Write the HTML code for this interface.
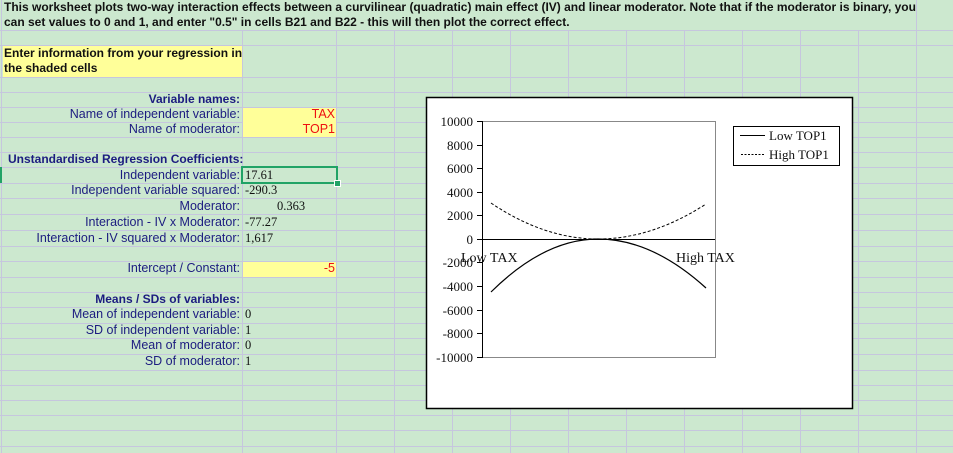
<!DOCTYPE html>
<html><head><meta charset="utf-8"><style>
body{margin:0;width:953px;height:453px;background:#cce8cf;position:relative;overflow:hidden;font-family:"Liberation Sans",Arial,sans-serif;}
.t{position:absolute;font-size:12.5px;line-height:15px;color:#1c1c80;white-space:nowrap;}
.r{text-align:right;right:713px;}
.b{font-weight:bold;}
.v{position:absolute;font-size:12.5px;line-height:15px;color:#111;font-family:"Liberation Serif",serif;white-space:nowrap;}
.y{position:absolute;background:#ffff99;}
.red{color:#ee1111;}
</style></head><body>
<svg width="953" height="453" style="position:absolute;left:0;top:0">
<g stroke="#c6c6de" stroke-width="1">
<line x1="1.5" y1="0" x2="1.5" y2="453"/>
<line x1="242.5" y1="30" x2="242.5" y2="453"/>
<line x1="336.5" y1="30" x2="336.5" y2="453"/>
<line x1="394.5" y1="30" x2="394.5" y2="453"/>
<line x1="452.5" y1="30" x2="452.5" y2="453"/>
<line x1="510.5" y1="30" x2="510.5" y2="453"/>
<line x1="568.5" y1="30" x2="568.5" y2="453"/>
<line x1="626.5" y1="30" x2="626.5" y2="453"/>
<line x1="684.5" y1="30" x2="684.5" y2="453"/>
<line x1="742.5" y1="30" x2="742.5" y2="453"/>
<line x1="800.5" y1="30" x2="800.5" y2="453"/>
<line x1="858.5" y1="30" x2="858.5" y2="453"/>
<line x1="916.5" y1="0" x2="916.5" y2="453"/>
<line x1="0" y1="30.5" x2="953" y2="30.5"/>
<line x1="0" y1="45.5" x2="953" y2="45.5"/>
<line x1="0" y1="77.5" x2="953" y2="77.5"/>
<line x1="0" y1="92.5" x2="953" y2="92.5"/>
<line x1="0" y1="107.5" x2="953" y2="107.5"/>
<line x1="0" y1="122.5" x2="953" y2="122.5"/>
<line x1="0" y1="137.5" x2="953" y2="137.5"/>
<line x1="0" y1="152.5" x2="953" y2="152.5"/>
<line x1="0" y1="167.5" x2="953" y2="167.5"/>
<line x1="0" y1="183.5" x2="953" y2="183.5"/>
<line x1="0" y1="198.5" x2="953" y2="198.5"/>
<line x1="0" y1="214.5" x2="953" y2="214.5"/>
<line x1="0" y1="230.5" x2="953" y2="230.5"/>
<line x1="0" y1="246.5" x2="953" y2="246.5"/>
<line x1="0" y1="261.5" x2="953" y2="261.5"/>
<line x1="0" y1="277.5" x2="953" y2="277.5"/>
<line x1="0" y1="292.5" x2="953" y2="292.5"/>
<line x1="0" y1="307.5" x2="953" y2="307.5"/>
<line x1="0" y1="323.5" x2="953" y2="323.5"/>
<line x1="0" y1="338.5" x2="953" y2="338.5"/>
<line x1="0" y1="354.5" x2="953" y2="354.5"/>
<line x1="0" y1="370.5" x2="953" y2="370.5"/>
<line x1="0" y1="385.5" x2="953" y2="385.5"/>
<line x1="0" y1="400.5" x2="953" y2="400.5"/>
<line x1="0" y1="415.5" x2="953" y2="415.5"/>
<line x1="0" y1="430.5" x2="953" y2="430.5"/>
<line x1="0" y1="446.5" x2="953" y2="446.5"/>
</g>
</svg>
<div class="y" style="left:3px;top:46px;width:239px;height:31px"></div>
<div class="y" style="left:243px;top:108px;width:93px;height:29px"></div>
<div class="y" style="left:243px;top:262px;width:93px;height:15px"></div>
<div style="position:absolute;left:0;top:167px;width:2px;height:16px;background:#21a366"></div>
<div style="position:absolute;left:241px;top:166px;width:93px;height:14px;border:2px solid #21a366"></div>
<div style="position:absolute;left:334px;top:180px;width:5px;height:5px;background:#21a366;border:1px solid #fff"></div>

<div class="t b" style="left:4px;top:0;color:#111;line-height:15px;font-size:12px">This worksheet plots two-way interaction effects between a curvilinear (quadratic) main effect (IV) and linear moderator. Note that if the moderator is binary, you<br>can set values to 0 and 1, and enter "0.5" in cells B21 and B22 - this will then plot the correct effect.</div>
<div class="t b" style="left:4px;top:46px;color:#111;line-height:15px;font-size:12px">Enter information from your regression in<br>the shaded cells</div>

<div class="t r b" style="top:92px;font-size:12px">Variable names:</div>
<div class="t r" style="top:107px">Name of independent variable:</div>
<div class="t r" style="top:122px">Name of moderator:</div>
<div class="t red" style="top:107px;right:618px">TAX</div>
<div class="t red" style="top:122px;right:618px">TOP1</div>
<div class="t b" style="top:152px;left:8px;font-size:12px">Unstandardised Regression Coefficients:</div>
<div class="t r" style="top:168px">Independent variable:</div>
<div class="t r" style="top:183px">Independent variable squared:</div>
<div class="t r" style="top:199px">Moderator:</div>
<div class="t r" style="top:215px">Interaction - IV x Moderator:</div>
<div class="t r" style="top:231px">Interaction - IV squared x Moderator:</div>
<div class="t r" style="top:261px">Intercept / Constant:</div>
<div class="t red" style="top:261px;right:618px">-5</div>
<div class="t r b" style="top:292px;font-size:12px">Means / SDs of variables:</div>
<div class="t r" style="top:307px">Mean of independent variable:</div>
<div class="t r" style="top:323px">SD of independent variable:</div>
<div class="t r" style="top:338px">Mean of moderator:</div>
<div class="t r" style="top:354px">SD of moderator:</div>
<div class="v" style="left:245px;top:168px">17.61</div>
<div class="v" style="left:245px;top:183px">-290.3</div>
<div class="v" style="left:277px;top:199px">0.363</div>
<div class="v" style="left:245px;top:215px">-77.27</div>
<div class="v" style="left:245px;top:231px">1,617</div>
<div class="v" style="left:245px;top:307px">0</div>
<div class="v" style="left:245px;top:323px">1</div>
<div class="v" style="left:245px;top:338px">0</div>
<div class="v" style="left:245px;top:354px">1</div>

<svg width="953" height="453" style="position:absolute;left:0;top:0" font-family="Liberation Serif,serif" font-size="13">
<rect x="426.5" y="97.5" width="426" height="311" fill="#fff" stroke="#000" stroke-width="1.5"/>
<rect x="482.5" y="121.5" width="233" height="236" fill="none" stroke="#888"/>
<g stroke="#000">
<line x1="482.5" y1="121" x2="482.5" y2="358"/>
<line x1="477" y1="121.5" x2="482" y2="121.5"/><line x1="477" y1="145.5" x2="482" y2="145.5"/>
<line x1="477" y1="168.5" x2="482" y2="168.5"/><line x1="477" y1="192.5" x2="482" y2="192.5"/>
<line x1="477" y1="215.5" x2="482" y2="215.5"/><line x1="477" y1="239.5" x2="715" y2="239.5"/>
<line x1="477" y1="262.5" x2="482" y2="262.5"/><line x1="477" y1="286.5" x2="482" y2="286.5"/>
<line x1="477" y1="310.5" x2="482" y2="310.5"/><line x1="477" y1="333.5" x2="482" y2="333.5"/>
<line x1="477" y1="357.5" x2="482" y2="357.5"/>
</g>
<g text-anchor="end" fill="#111">
<text x="473" y="126">10000</text><text x="473" y="150">8000</text><text x="473" y="173">6000</text>
<text x="473" y="197">4000</text><text x="473" y="220">2000</text><text x="473" y="244">0</text>
<text x="473" y="267">-2000</text><text x="473" y="291">-4000</text><text x="473" y="315">-6000</text>
<text x="473" y="338">-8000</text><text x="473" y="362">-10000</text>
</g>
<path d="M491 292 Q544.5 239 598 239 Q652 239 706 288" fill="none" stroke="#000" stroke-width="1.2"/>
<path d="M491 203 Q544.5 239 598 239 Q652 239 706 204" fill="none" stroke="#000" stroke-dasharray="3,2"/>
<text x="461" y="262" font-size="14" fill="#111">Low TAX</text>
<text x="676" y="262" font-size="14" fill="#111">High TAX</text>
<rect x="733.5" y="126.5" width="106" height="39" fill="#fff" stroke="#000"/>
<line x1="740" y1="135.5" x2="765" y2="135.5" stroke="#000"/>
<line x1="741" y1="154.5" x2="765" y2="154.5" stroke="#000" stroke-dasharray="2,1.5"/>
<text x="769" y="140" fill="#111">Low TOP1</text>
<text x="769" y="159" fill="#111">High TOP1</text>
</svg>
</body></html>
